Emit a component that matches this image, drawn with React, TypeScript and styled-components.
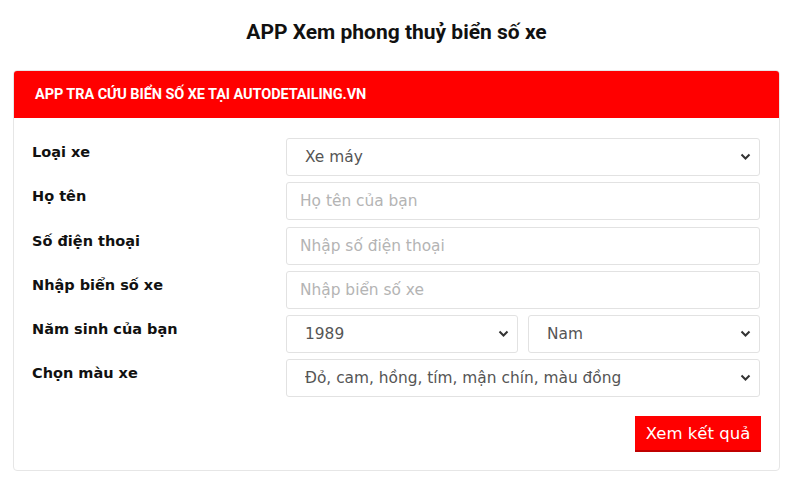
import React from "react";
import styled, { createGlobalStyle } from "styled-components";

const Global = createGlobalStyle`
  html, body { margin: 0; padding: 0; background: #fff; }
  * { box-sizing: border-box; }
`;

const Page = styled.div`
  width: 800px;
  padding: 0 20px 0 13px;
  font-family: "DejaVu Sans", Tahoma, sans-serif;
`;

const Title = styled.h1`
  margin: 0;
  height: 70px;
  display: flex;
  align-items: center;
  justify-content: center;
  padding: 0 0 6px 0;
  font-family: Roboto, "Liberation Sans", sans-serif;
  font-weight: 700;
  font-size: 21px;
  color: #111;
`;

const Card = styled.div`
  border: 1px solid #e6e6e6;
  border-radius: 4px;
  overflow: hidden;
`;

const CardHeader = styled.div`
  background: #ff0000;
  height: 48px;
  display: flex;
  align-items: center;
  padding-left: 22px;
  margin: -1px -1px 0;
  font-family: Roboto, "Liberation Sans", sans-serif;
  font-weight: 700;
  font-size: 14.5px;
  letter-spacing: -0.08px;
  color: #fff;
`;

const Body = styled.div`
  padding: 20px 19px 18px 18px;
`;

const Form = styled.div`
  display: grid;
  grid-template-columns: 254px 1fr;
  row-gap: 6.3px;
`;

const Label = styled.label`
  font-weight: 700;
  font-size: 14.5px;
  color: #111;
  padding-top: 4px;
  line-height: 20px;
`;

const Pair = styled.div`
  display: grid;
  grid-template-columns: 1fr 1fr;
  gap: 10px;
`;

const SelectWrap = styled.div`
  position: relative;
`;

const Select = styled.select`
  appearance: none;
  width: 100%;
  height: 38px;
  border: 1px solid #e2e2e2;
  border-radius: 3px;
  background: #fff;
  padding: 0 30px 0 18px;
  font-family: "DejaVu Sans", Tahoma, sans-serif;
  font-size: 15.4px;
  color: #555;
  outline: none;
`;

const Chevron = styled.svg`
  position: absolute;
  right: 9px;
  top: 50%;
  margin-top: -4px;
  pointer-events: none;
`;

const Input = styled.input`
  width: 100%;
  height: 38px;
  border: 1px solid #e2e2e2;
  border-radius: 3px;
  padding: 0 13px;
  font-family: "DejaVu Sans", Tahoma, sans-serif;
  font-size: 15.4px;
  color: #555;
  outline: none;
  &::placeholder { color: #b4b4b4; }
`;

const Actions = styled.div`
  display: flex;
  justify-content: flex-end;
  margin-top: 19px;
`;

const Button = styled.button`
  width: 126px;
  height: 36px;
  border: none;
  border-bottom: 2px solid #c00000;
  background: #ff0000;
  color: #fff;
  font-family: "DejaVu Sans", Tahoma, sans-serif;
  font-size: 16.5px;
  padding: 0;
  margin-right: -1px;
`;

const Sel = ({ value, options }: { value: string; options: string[] }) => (
  <SelectWrap>
    <Select defaultValue={value}>
      {options.map((o) => (
        <option key={o}>{o}</option>
      ))}
    </Select>
    <Chevron width="11" height="8" viewBox="0 0 11 8">
      <path d="M1.5 1.5 L5.5 5.5 L9.5 1.5" fill="none" stroke="#333" strokeWidth="2" />
    </Chevron>
  </SelectWrap>
);

export default function App() {
  return (
    <>
      <Global />
      <Page>
        <Title>APP Xem phong thuỷ biển số xe</Title>
        <Card>
          <CardHeader>APP TRA CỨU BIỂN SỐ XE TẠI AUTODETAILING.VN</CardHeader>
          <Body>
            <Form>
              <Label>Loại xe</Label>
              <Sel value="Xe máy" options={["Xe máy", "Ô tô"]} />
              <Label>Họ tên</Label>
              <Input placeholder="Họ tên của bạn" />
              <Label>Số điện thoại</Label>
              <Input placeholder="Nhập số điện thoại" />
              <Label>Nhập biển số xe</Label>
              <Input placeholder="Nhập biển số xe" />
              <Label>Năm sinh của bạn</Label>
              <Pair>
                <Sel value="1989" options={["1989", "1990"]} />
                <Sel value="Nam" options={["Nam", "Nữ"]} />
              </Pair>
              <Label>Chọn màu xe</Label>
              <Sel
                value="Đỏ, cam, hồng, tím, mận chín, màu đồng"
                options={["Đỏ, cam, hồng, tím, mận chín, màu đồng"]}
              />
            </Form>
            <Actions>
              <Button>Xem kết quả</Button>
            </Actions>
          </Body>
        </Card>
      </Page>
    </>
  );
}
